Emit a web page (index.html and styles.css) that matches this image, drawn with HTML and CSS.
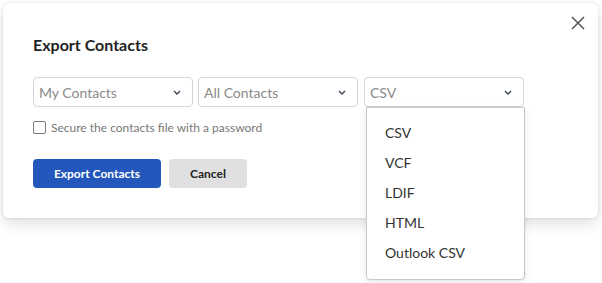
FILE: index.html
```html
<!DOCTYPE html>
<html lang="en">
<head>
    <meta charset="UTF-8">
    <title>Export Contacts</title>
    <link rel="stylesheet" href="styles.css">
</head>
<body>
    <div class="dialog">
        <button class="close" aria-label="Close">
            <svg width="14" height="14" viewBox="0 0 14 14"><path d="M1 1L13 13M13 1L1 13" stroke="#555" stroke-width="1.5" fill="none"/></svg>
        </button>
        <h1>Export Contacts</h1>

        <!-- Source / filter / format selects -->
        <div class="selects">
            <div class="select">
                <span>My Contacts</span>
                <svg class="chevron" width="8" height="5" viewBox="0 0 8 5"><path d="M1 1L4 4L7 1" stroke="#3a4452" stroke-width="1.4" fill="none"/></svg>
            </div>
            <div class="select">
                <span>All Contacts</span>
                <svg class="chevron" width="8" height="5" viewBox="0 0 8 5"><path d="M1 1L4 4L7 1" stroke="#3a4452" stroke-width="1.4" fill="none"/></svg>
            </div>
            <div class="select open">
                <span>CSV</span>
                <svg class="chevron" width="8" height="5" viewBox="0 0 8 5"><path d="M1 1L4 4L7 1" stroke="#3a4452" stroke-width="1.4" fill="none"/></svg>
                <ul class="menu">
                    <li>CSV</li>
                    <li>VCF</li>
                    <li>LDIF</li>
                    <li>HTML</li>
                    <li>Outlook CSV</li>
                </ul>
            </div>
        </div>

        <label class="secure">
            <span class="box"></span>
            Secure the contacts file with a password
        </label>

        <div class="actions">
            <button class="btn primary">Export Contacts</button>
            <button class="btn">Cancel</button>
        </div>
    </div>
</body>
</html>
```

FILE: styles.css
```css
/* Page */
html, body {
    height: 100%;
}

body {
    margin: 0;
    min-height: 283px;
    background: #ffffff;
    font-family: Lato, "Open Sans", sans-serif;
    color: #222;
}

/* Dialog */
.dialog {
    position: relative;
    margin: 3px 4px 0 3px;
    height: 215px;
    box-sizing: border-box;
    padding: 32px 30px 0 30px;
    background: #fff;
    border-radius: 6px;
    box-shadow: 0 0 3px rgba(0, 0, 0, 0.12), 0 6px 14px rgba(0, 0, 0, 0.12);
}

.close {
    position: absolute;
    top: 13px;
    right: 13px;
    padding: 0;
    border: 0;
    background: none;
    line-height: 0;
}

h1 {
    margin: 0;
    font-size: 16px;
    font-weight: 700;
    color: #222;
    line-height: 20px;
}

/* Selects */
.selects {
    display: flex;
    gap: 5px;
    margin-top: 22px;
}

.select {
    position: relative;
    display: flex;
    align-items: center;
    justify-content: space-between;
    width: 160px;
    height: 30px;
    box-sizing: border-box;
    padding: 0 11px 0 5px;
    border: 1px solid #d6d6d6;
    border-radius: 4px;
    font-size: 14px;
    color: #8a8a8a;
}

.select.open {
    margin-left: 1px;
}

.menu {
    position: absolute;
    top: 29px;
    left: 1px;
    width: 159px;
    box-sizing: border-box;
    margin: 0;
    padding: 10px 0 11px 0;
    list-style: none;
    background: #fff;
    border: 1px solid #c8c8c8;
    border-radius: 0 0 4px 4px;
    box-shadow: 0 2px 6px rgba(0, 0, 0, 0.1);
    z-index: 2;
}

.menu li {
    height: 30px;
    line-height: 30px;
    padding-left: 18px;
    font-size: 14px;
    color: #333;
}

/* Checkbox row */
.secure {
    display: flex;
    align-items: center;
    gap: 5px;
    margin-top: 13px;
    font-size: 12px;
    color: #777;
}

.secure .box {
    width: 11px;
    height: 11px;
    border: 1px solid #777;
    border-radius: 2px;
}

/* Buttons */
.actions {
    display: flex;
    gap: 8px;
    margin-top: 24px;
}

.btn {
    height: 29px;
    padding: 0 20px;
    border: 0;
    border-radius: 4px;
    background: #e0e0e0;
    font-family: Lato, sans-serif;
    font-size: 12px;
    font-weight: 700;
    color: #222;
}

.btn.primary {
    width: 128px;
    background: #2357bb;
    color: #fff;
}

.btn:not(.primary) {
    width: 78px;
}
```
